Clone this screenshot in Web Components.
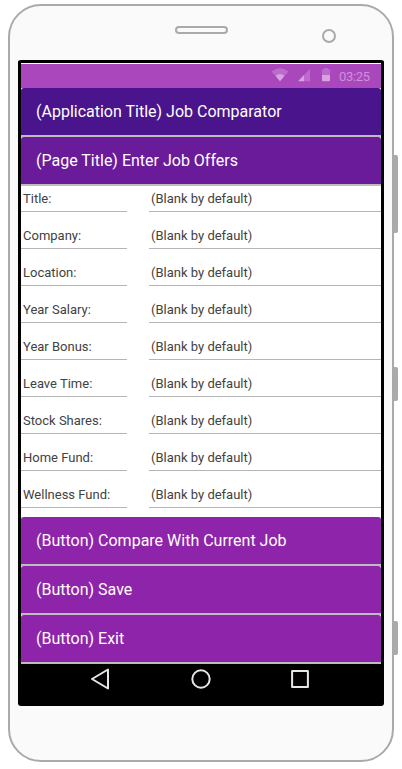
<!DOCTYPE html>
<html lang="en">
<head>
<meta charset="utf-8">
<title>Job Comparator</title>
<style>
html, body { margin: 0; background: #fff; font-family: Roboto, "Liberation Sans", sans-serif; }
body { width: 402px; height: 769px; overflow: hidden; }
</style>
</head>
<body>
<phone-frame>
  <status-bar time="03:25"></status-bar>
  <title-bar style="--bg:#4a148c">(Application Title) Job Comparator</title-bar>
  <title-bar style="--bg:#6a1b9a">(Page Title) Enter Job Offers</title-bar>
  <offer-form>
    <form-row label="Title:">(Blank by default)</form-row>
    <form-row label="Company:">(Blank by default)</form-row>
    <form-row label="Location:">(Blank by default)</form-row>
    <form-row label="Year Salary:">(Blank by default)</form-row>
    <form-row label="Year Bonus:">(Blank by default)</form-row>
    <form-row label="Leave Time:">(Blank by default)</form-row>
    <form-row label="Stock Shares:">(Blank by default)</form-row>
    <form-row label="Home Fund:">(Blank by default)</form-row>
    <form-row label="Wellness Fund:">(Blank by default)</form-row>
  </offer-form>
  <title-bar style="--bg:#8e24aa">(Button) Compare With Current Job</title-bar>
  <title-bar style="--bg:#8e24aa">(Button) Save</title-bar>
  <title-bar style="--bg:#8e24aa">(Button) Exit</title-bar>
  <nav-bar></nav-bar>
</phone-frame>
<script>
function define(name, html, setup) {
  customElements.define(name, class extends HTMLElement {
    constructor() {
      super();
      this.attachShadow({ mode: "open" }).innerHTML = html;
    }
    connectedCallback() { if (setup) setup(this, this.shadowRoot); }
  });
}

define("phone-frame", `
<style>
:host { display: flow-root; box-sizing: border-box; position: relative; width: 386px; height: 758px; margin: 4px 0 0 8px;
  border: 2px solid #aaa; border-radius: 33px; background: #fafafa; }
header { display: flex; justify-content: space-between; align-items: flex-start; height: 54px; box-sizing: border-box; padding: 20px 56px 0 165px; }
.speaker { box-sizing: border-box; width: 53px; height: 8px; border: 2px solid #aaa; border-radius: 4px; }
.camera { box-sizing: border-box; width: 14px; height: 14px; margin-top: 3px; border: 2px solid #aaa; border-radius: 50%; }
main { box-sizing: border-box; width: 366px; height: 646px; margin-left: 8px; border: 3px solid #000; border-bottom: 0; border-radius: 3px; background: #fff; overflow: hidden; display: flex; flex-direction: column; padding-top: 1px; }
.key { position: absolute; left: 384px; width: 4px; background: #aaa; border-radius: 0 2px 2px 0; }
.k1 { top: 149px; height: 78px; } .k2 { top: 361px; height: 34px; } .k3 { top: 615px; height: 34px; }
</style>
<header><div class="speaker"></div><div class="camera"></div></header>
<main><slot></slot></main>
<div class="key k1"></div><div class="key k2"></div><div class="key k3"></div>`);

define("status-bar", `
<style>
:host { display: flex; flex: none; align-items: center; justify-content: flex-end; height: 24px; box-sizing: border-box; padding-right: 9px; background: #ab47bc; color: #d08fda; font-size: 13px; }
svg { flex: none; width: 60px; height: 24px; margin-right: 8px; }
span { width: 33px; line-height: 24px; padding-top: 1px; letter-spacing: -.3px; white-space: nowrap; }
</style>
<svg viewBox="0 0 60 24" fill="#fff">
  <path fill-opacity=".2" d="M0.5 7.6Q9 1 17.5 7.6L9 17.3Z"/>
  <path fill-opacity=".38" d="M4.6 12Q9 7.8 13.4 12L9 17.3Z"/>
  <path fill-opacity=".2" d="M27 17.2L39 5V17.2Z"/>
  <path fill-opacity=".38" d="M27 17.2L33 11.1V17.2Z"/>
  <path fill-opacity=".2" d="M51 11V6.2Q51 5.2 52 5.2H53V4H57V5.2H58Q59 5.2 59 6.2V11Z"/>
  <path fill-opacity=".5" d="M51 11H59V16.2Q59 17.2 58 17.2H52Q51 17.2 51 16.2Z"/>
</svg><span></span>`, (el, root) => { root.querySelector("span").textContent = el.getAttribute("time"); });

define("title-bar", `
<style>
:host { display: block; flex: none; height: 49px; box-sizing: border-box; border-bottom: 2px solid #bdbdbd; background: #e6e6e6; color: #fff; font-size: 16px; }
div { height: 47px; line-height: 47px; padding-left: 15px; border-radius: 3px 3px 0 0; background: var(--bg); white-space: nowrap; }
</style>
<div><slot></slot></div>`);

define("offer-form", `
<style>
:host { display: flex; flex: none; flex-direction: column; gap: 11px; height: 331px; background: #fff; }
</style>
<slot></slot>`);

define("form-row", `
<style>
:host { display: grid; grid-template-columns: 106px 232px; column-gap: 22px; font-size: 13px; line-height: 25px; color: #424242; }
div { height: 25px; padding-left: 2px; border-bottom: 1px solid #b5b5b5; white-space: nowrap; }
</style>
<div class="label"></div><div><slot></slot></div>`, (el, root) => { root.querySelector(".label").textContent = el.getAttribute("label"); });

define("nav-bar", `
<style>
:host { display: block; flex: 1; background: #000; }
svg { display: block; width: 360px; height: 42px; }
</style>
<svg viewBox="0 0 360 42" fill="none" stroke="#e6e6e6" stroke-width="2" stroke-linejoin="round">
  <path d="M71 15L87 5.5V24.5Z"/>
  <circle cx="180" cy="15" r="8.7"/>
  <rect x="271.1" y="7.1" width="15.8" height="15.8"/>
</svg>`);
</script>
</body>
</html>
